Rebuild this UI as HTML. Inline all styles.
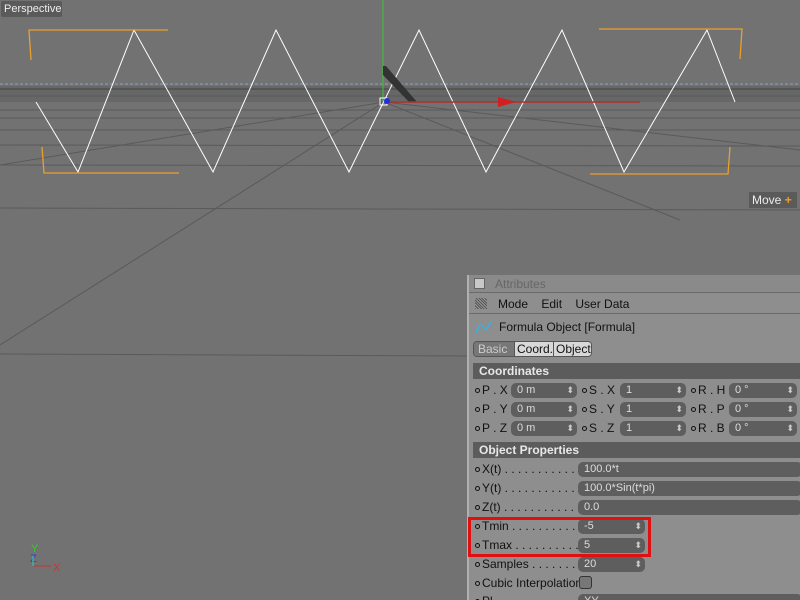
<!DOCTYPE html>
<html><head><style>
*{margin:0;padding:0;box-sizing:border-box}
html,body{width:800px;height:600px;overflow:hidden}
body{background:#727272;font-family:"Liberation Sans",sans-serif;font-size:11px;color:#111;position:relative}
.a{position:absolute}
.panel{left:467px;top:275px;width:333px;height:325px;background:#8e8e8e;border-left:2px solid #b0b0b0;overflow:hidden}
.hdr{background:#5c5c5c;color:#e8e8e8;font-weight:bold;font-size:12px;padding-left:6px;height:16px;line-height:16px}
.f{position:absolute;height:15px;background:#5e5e5e;border-radius:5px;color:#ddd;line-height:15px;padding-left:6px;font-size:11px}
.sp:after{content:"⬍";position:absolute;right:3px;top:0;font-size:9px;color:#ccc}
.lb{position:absolute;font-size:12px;color:#111;line-height:15px;white-space:nowrap}
.dot{display:inline-block;width:5px;height:5px;border:1px solid #111;border-radius:50%;margin-right:2px;vertical-align:1px}
</style></head><body>
<svg class="a" style="left:0;top:0" width="800" height="600">
<rect x="0" y="86" width="800" height="16" fill="#676767"/>
<line x1="0" y1="89" x2="800" y2="89" stroke="#555" stroke-width="2"/>
<line x1="0" y1="96" x2="800" y2="96" stroke="#5a5a5a"/>
<line x1="0" y1="84" x2="800" y2="84" stroke="#8aa0c0" stroke-dasharray="3,2"/>
<g stroke="#5a5a5a" stroke-width="1" fill="none">
<line x1="0" y1="110" x2="800" y2="110"/><line x1="0" y1="118" x2="800" y2="118"/>
<line x1="0" y1="130" x2="800" y2="130"/><line x1="0" y1="145" x2="800" y2="146"/>
<line x1="0" y1="165" x2="800" y2="166"/><line x1="0" y1="208" x2="800" y2="210"/>
<line x1="0" y1="354" x2="467" y2="356"/>
<line x1="384" y1="102" x2="0" y2="345"/><line x1="384" y1="102" x2="0" y2="165"/>
<line x1="384" y1="102" x2="680" y2="220"/><line x1="384" y1="102" x2="800" y2="150"/>
</g>
<polyline fill="none" stroke="#fff" stroke-width="1" points="36,102 78,172 134,30 213,172 276,30 349,172 419,30 486,172 562,30 624,172 707,30 735,102"/>
<g stroke="#e8a030" stroke-width="1.3" fill="none">
<polyline points="31,60 29,30 168,30"/><polyline points="42,147 44,173 179,173"/>
<polyline points="599,29 742,29 740,59"/><polyline points="730,147 728,174 590,174"/>
</g>
<line x1="383" y1="0" x2="383" y2="102" stroke="#3c3" stroke-width="1"/>
<polygon points="383,66 386,66 417,102 409,102 383,75" fill="#333"/>
<line x1="385" y1="102" x2="640" y2="102" stroke="#b03030" stroke-width="1.5"/>
<polygon points="498,97 516,102 498,107" fill="#d02020"/>
<rect x="380" y="98" width="7" height="7" fill="none" stroke="#fff"/>
<circle cx="387" cy="101" r="3" fill="#2030e0"/>
<g font-family="Liberation Sans" font-size="11">
<text x="31" y="552" fill="#3c3">Y</text><text x="30" y="562" fill="#34c">Z</text>
<line x1="33" y1="566" x2="51" y2="566" stroke="#c33"/><line x1="33" y1="556" x2="33" y2="566" stroke="#3cc"/>
<text x="53" y="571" fill="#c33">X</text></g>
</svg>
<div class="a" style="left:1px;top:1px;height:16px;width:61px;background:#5a5a5a;color:#eee;font-size:11px;line-height:16px;padding-left:3px;border-radius:2px">Perspective</div>
<div class="a" style="left:749px;top:192px;height:16px;width:48px;background:#5a5a5a;color:#eee;font-size:12px;line-height:16px;padding-left:3px">Move <span style="color:#e8a030;font-weight:bold">+</span></div>

<div class="a panel">
<div class="a" style="left:0;top:0;width:333px;height:18px;background:#8a8a8a;border-bottom:1px solid #6a6a6a"><span class="a" style="left:5px;top:3px;width:11px;height:11px;background:#c8c8c8;border:1px solid #666"></span><span class="a" style="left:26px;top:2px;color:#666;font-size:12px">Attributes</span></div>
<div class="a" style="left:0;top:19px;width:333px;height:20px;border-bottom:1px solid #6a6a6a"><span class="a" style="left:6px;top:4px;width:12px;height:11px;background:repeating-linear-gradient(45deg,#555 0 1px,#999 1px 2px)"></span><span class="a" style="left:29px;top:3px;font-size:12px">Mode&nbsp;&nbsp;&nbsp;&nbsp;Edit&nbsp;&nbsp;&nbsp;&nbsp;User Data</span></div>
<svg class="a" style="left:6px;top:44px" width="18" height="16"><path d="M1 14 Q5 2 8 8 T16 2" fill="none" stroke="#3ab0e0" stroke-width="1.6"/></svg>
<span class="a" style="left:30px;top:45px;font-size:12px">Formula Object [Formula]</span>
<div class="a" style="left:4px;top:66px;height:16px;width:119px;border:1px solid #555;border-radius:4px;overflow:hidden;display:flex;font-size:12px;line-height:14px">
<span style="background:#777;color:#ccc;width:40px;padding-left:4px">Basic</span><span style="background:#d8d8d8;width:39px;padding-left:2px;border-left:1px solid #555">Coord.</span><span style="background:#d8d8d8;flex:1;padding-left:2px;border-left:1px solid #555">Object</span></div>
<div class="a hdr" style="left:4px;top:88px;width:329px">Coordinates</div>
<div class="lb" style="left:6px;top:108px"><span class="dot"></span>P . X</div><div class="f sp" style="left:42px;top:108px;width:66px">0 m</div>
<div class="lb" style="left:113px;top:108px"><span class="dot"></span>S . X</div><div class="f sp" style="left:151px;top:108px;width:66px">1</div>
<div class="lb" style="left:222px;top:108px"><span class="dot"></span>R . H</div><div class="f sp" style="left:260px;top:108px;width:68px">0 °</div>
<div class="lb" style="left:6px;top:127px"><span class="dot"></span>P . Y</div><div class="f sp" style="left:42px;top:127px;width:66px">0 m</div>
<div class="lb" style="left:113px;top:127px"><span class="dot"></span>S . Y</div><div class="f sp" style="left:151px;top:127px;width:66px">1</div>
<div class="lb" style="left:222px;top:127px"><span class="dot"></span>R . P</div><div class="f sp" style="left:260px;top:127px;width:68px">0 °</div>
<div class="lb" style="left:6px;top:146px"><span class="dot"></span>P . Z</div><div class="f sp" style="left:42px;top:146px;width:66px">0 m</div>
<div class="lb" style="left:113px;top:146px"><span class="dot"></span>S . Z</div><div class="f sp" style="left:151px;top:146px;width:66px">1</div>
<div class="lb" style="left:222px;top:146px"><span class="dot"></span>R . B</div><div class="f sp" style="left:260px;top:146px;width:68px">0 °</div>
<div class="a hdr" style="left:4px;top:167px;width:329px">Object Properties</div>
<div class="lb" style="left:6px;top:187px"><span class="dot"></span>X(t) . . . . . . . . . . .</div><div class="f" style="left:109px;top:187px;width:224px">100.0*t</div>
<div class="lb" style="left:6px;top:206px"><span class="dot"></span>Y(t) . . . . . . . . . . .</div><div class="f" style="left:109px;top:206px;width:224px">100.0*Sin(t*pi)</div>
<div class="lb" style="left:6px;top:225px"><span class="dot"></span>Z(t) . . . . . . . . . . .</div><div class="f" style="left:109px;top:225px;width:224px">0.0</div>
<div class="lb" style="left:6px;top:244px"><span class="dot"></span>Tmin . . . . . . . . . .</div><div class="f sp" style="left:109px;top:244px;width:67px">-5</div>
<div class="lb" style="left:6px;top:263px"><span class="dot"></span>Tmax . . . . . . . . . .</div><div class="f sp" style="left:109px;top:263px;width:67px">5</div>
<div class="lb" style="left:6px;top:282px"><span class="dot"></span>Samples . . . . . . .</div><div class="f sp" style="left:109px;top:282px;width:67px">20</div>
<div class="lb" style="left:6px;top:301px"><span class="dot"></span>Cubic Interpolation</div><div class="a" style="left:110px;top:301px;width:13px;height:13px;border:1px solid #333;border-radius:3px;background:#777"></div>
<div class="lb" style="left:6px;top:319px"><span class="dot"></span>Pl . . . . . . . .</div><div class="f" style="left:109px;top:319px;width:224px">XY</div>
</div>
<div class="a" style="left:468px;top:517px;width:183px;height:40px;border:3px solid #e01010"></div>
</body></html>
